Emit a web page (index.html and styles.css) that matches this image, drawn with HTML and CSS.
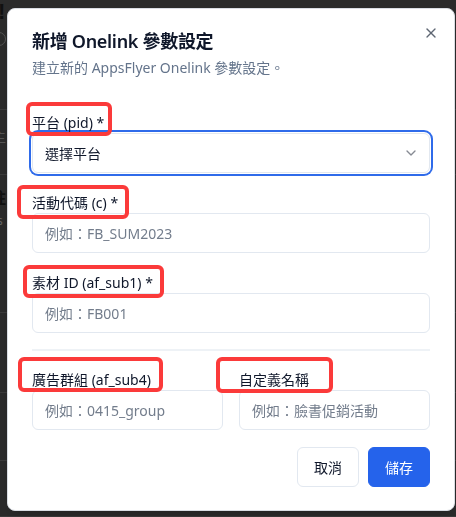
FILE: index.html
```html
<!DOCTYPE html>
<html lang="zh-Hant">
<head>
<meta charset="utf-8">
<title>新增 Onelink 參數設定</title>
<link rel="stylesheet" href="styles.css">
</head>
<body>
  <div class="page">
    <div class="bg-row r1"><span class="bg-bang">!</span><span class="bg-circle"></span></div>
    <div class="bg-row r2"><span class="bg-faint">主</span></div>
    <div class="bg-row r3"><span class="bg-bold">註</span><span class="bg-s">s</span></div>
    <div class="bg-row r4"></div>
    <div class="bg-row r5"></div>
    <div class="bg-row r6"></div>
  </div>

  <div class="dialog" role="dialog">
    <button class="close" type="button" aria-label="Close">
      <svg viewBox="0 0 24 24" width="16" height="16" fill="none" stroke="currentColor" stroke-width="2" stroke-linecap="round" stroke-linejoin="round"><path d="M18 6 6 18"/><path d="m6 6 12 12"/></svg>
    </button>

    <div class="header">
      <h2 class="title">新增 Onelink 參數設定</h2>
      <p class="desc">建立新的 AppsFlyer Onelink 參數設定。</p>
    </div>

    <form class="form">
      <div class="fields">
        <div class="field">
          <span class="mark m1"></span>
          <label class="label">平台 (pid) *</label>
          <button class="select" type="button">
            <span>選擇平台</span>
            <svg class="chev" viewBox="0 0 24 24" width="16" height="16" fill="none" stroke="currentColor" stroke-width="2" stroke-linecap="round" stroke-linejoin="round"><path d="m6 9 6 6 6-6"/></svg>
          </button>
        </div>
        <div class="field">
          <span class="mark m2"></span>
          <label class="label">活動代碼 (c) *</label>
          <input class="input" placeholder="例如：FB_SUM2023">
        </div>
        <div class="field">
          <span class="mark m3"></span>
          <label class="label">素材 ID (af_sub1) *</label>
          <input class="input" placeholder="例如：FB001">
        </div>
      </div>

      <div class="sep"></div>

      <div class="grid2">
        <div class="field">
          <span class="mark m4"></span>
          <label class="label">廣告群組 (af_sub4)</label>
          <input class="input" placeholder="例如：0415_group">
        </div>
        <div class="field">
          <span class="mark m5"></span>
          <label class="label">自定義名稱</label>
          <input class="input" placeholder="例如：臉書促銷活動">
        </div>
      </div>
    </form>

    <div class="footer">
      <button class="btn outline" type="button">取消</button>
      <button class="btn primary" type="button">儲存</button>
    </div>
  </div>
</body>
</html>
```

FILE: styles.css
```css
* { box-sizing: border-box; }

html, body {
  margin: 0;
  height: 100%;
}

body {
  background: #2b2b2b;
  font-family: "Noto Sans", "Noto Sans CJK TC", sans-serif;
  overflow: hidden;
  color: #0f172a;
}

/* background page (under overlay) */
.page {
  display: flex;
  flex-direction: column;
}
.bg-row {
  border-bottom: 1px solid #3b3b3b;
  position: relative;
  overflow: hidden;
}
.r1 { height: 110px; }
.r2 { height: 65px; }
.r3 { height: 138px; }
.r4 { height: 80px; }
.r5 { height: 68px; }
.r6 { height: 56px; }

.bg-bang {
  display: block;
  font: 700 22px/24px "Liberation Sans", sans-serif;
  color: #111;
  margin-left: -2px;
}
.bg-circle {
  display: block;
  width: 14px;
  height: 14px;
  border: 1px solid #555;
  border-radius: 50%;
  margin: 8px 0 0 -8px;
}
.bg-faint {
  display: block;
  font: 400 14px/20px "Noto Sans CJK TC", sans-serif;
  color: #555;
  margin: 16px 0 0 -8px;
}
.bg-bold {
  display: block;
  font: 700 16px/18px "Noto Sans CJK TC", sans-serif;
  color: #111;
  margin: 13px 0 0 -10px;
}
.bg-s {
  display: block;
  font: 400 12px/14px "Noto Sans", sans-serif;
  color: #666;
  margin: 8px 0 0 -3px;
}

/* dialog */
.dialog {
  position: fixed;
  left: 7px;
  top: 8px;
  width: 448px;
  height: 503px;
  background: #fff;
  border: 1px solid #d9dde3;
  border-radius: 8px;
  padding: 23px 24px 23px;
  box-shadow: 0 10px 15px -3px rgba(0,0,0,.1), 0 4px 6px -4px rgba(0,0,0,.1);
}

.close {
  position: absolute;
  right: 15px;
  top: 16px;
  width: 16px;
  height: 16px;
  padding: 0;
  border: 0;
  background: none;
  color: #374151;
  opacity: .8;
  display: flex;
}

.header {
  display: flex;
  flex-direction: column;
  gap: 8px;
}
.title {
  margin: 0;
  font-size: 18px;
  line-height: 18px;
  font-weight: 600;
  color: #0f172a;
  letter-spacing: -0.3px;
}
.desc {
  margin: 0;
  font-size: 14px;
  line-height: 20px;
  color: #64748b;
}

.form {
  margin-top: 35px;
}
.fields {
  display: flex;
  flex-direction: column;
  gap: 20px;
}
.field {
  position: relative;
  display: flex;
  flex-direction: column;
  min-width: 0;
}
.label {
  font-size: 14px;
  line-height: 20px;
  font-weight: 400;
  color: #0f172a;
  position: relative;
  z-index: 2;
}

.input,
.select {
  height: 40px;
  width: 100%;
  border: 1px solid #e2e8f0;
  border-radius: 6px;
  background: #fff;
  padding: 0 12px;
  font-family: "Noto Sans", "Noto Sans CJK TC", sans-serif;
  font-size: 14px;
  color: #0f172a;
  outline: none;
}
.input::placeholder {
  color: #737d8c;
  opacity: 1;
}
.select {
  display: flex;
  align-items: center;
  justify-content: space-between;
  text-align: left;
  box-shadow: 0 0 0 1px #fff, 0 0 0 3px #2f6bea;
  border-radius: 6px;
}
.chev {
  color: #0f172a;
  opacity: .5;
  margin-right: -2px;
}

.sep {
  height: 2px;
  background: #eef2f6;
  margin: 16px 0 19px;
}

.grid2 {
  display: grid;
  grid-template-columns: 1fr 1fr;
  gap: 16px;
}

/* annotation boxes */
.mark {
  position: absolute;
  border: 4px solid #fb3a3a;
  border-radius: 6px;
  z-index: 3;
  pointer-events: none;
}
.m1 { left: -6px;  top: -11px; width: 86px;  height: 34px; }
.m2 { left: -15px; top: -8px;  width: 112px; height: 34px; }
.m3 { left: -9px;  top: -8px;  width: 141px; height: 33px; }
.m4 { left: -14px; top: -13px; width: 145px; height: 35px; }
.m5 { left: -23px; top: -13px; width: 117px; height: 36px; }

.footer {
  display: flex;
  justify-content: flex-end;
  gap: 9px;
  margin-top: 17px;
}
.btn {
  height: 40px;
  padding: 0 16px;
  border-radius: 6px;
  font-family: "Noto Sans", "Noto Sans CJK TC", sans-serif;
  font-size: 14px;
  font-weight: 400;
  display: flex;
  align-items: center;
}
.outline {
  background: #fff;
  border: 1px solid #e2e8f0;
  color: #0f172a;
}
.primary {
  background: #2563eb;
  border: 1px solid #2563eb;
  color: #fff;
}
```
